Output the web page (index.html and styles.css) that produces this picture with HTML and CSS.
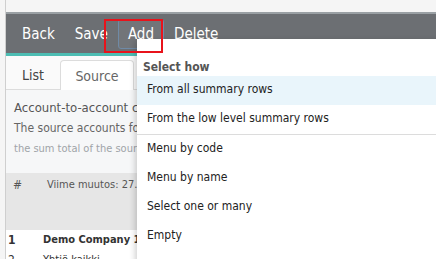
FILE: index.html
```html
<!DOCTYPE html>
<html lang="en">
<head>
    <meta charset="UTF-8">
    <title>Consolidation - Source</title>
    <link rel="stylesheet" href="styles.css">
</head>
<body>
    <div class="page">
        <div class="toolbar">
            <button class="tool-btn">Back</button>
            <button class="tool-btn">Save</button>
            <button class="tool-btn focused">Add</button>
            <button class="tool-btn">Delete</button>
        </div>

        <div class="panel">
            <div class="tabs">
                <div class="tab">List</div>
                <div class="tab active">Source</div>
            </div>

            <div class="content">
                <div class="info">
                    <div class="info-title">Account-to-account consolidation</div>
                    <div class="info-text">The source accounts for the target account are listed below.</div>
                    <div class="info-note">the sum total of the source accounts is moved to the target</div>
                </div>

                <div class="table-head">
                    <span class="col-num">#</span>
                    <span class="col-name">Viime muutos: 27.11.2023</span>
                </div>
                <div class="table-row">
                    <span class="col-num">1</span>
                    <span class="col-name">Demo Company 1</span>
                </div>
                <div class="table-row sub">
                    <span class="col-num">2</span>
                    <span class="col-name">Yhtiö kaikki</span>
                </div>
            </div>
        </div>
    </div>

    <!-- Add dropdown -->
    <div class="dropdown">
        <div class="dropdown-header">Select how</div>
        <div class="dropdown-item hover">From all summary rows</div>
        <div class="dropdown-item">From the low level summary rows</div>
        <div class="dropdown-divider"></div>
        <div class="dropdown-item">Menu by code</div>
        <div class="dropdown-item">Menu by name</div>
        <div class="dropdown-item">Select one or many</div>
        <div class="dropdown-item">Empty</div>
    </div>

    <!-- highlight marker -->
    <div class="marker"></div>
</body>
</html>
```

FILE: styles.css
```css
* {
    box-sizing: border-box;
    font-family: "DejaVu Sans", sans-serif;
    font-stretch: condensed;
}

body {
    margin: 0;
    background: #f5f5f5;
    height: 259px;
    overflow: hidden;
    position: relative;
}

.page {
    margin-left: 5px;
    padding-top: 12px;
    border-left: 1px solid #cfcfcf;
    height: 100%;
}

/* Toolbar */
.toolbar {
    display: flex;
    height: 44px;
    padding: 5px 6px 0;
    background: #6c6f73;
    border-top: 2px solid #9aa0a4;
    border-bottom: 3px solid #4dbdb3;
}

.tool-btn {
    height: 30px;
    padding: 0 9px;
    border: 1px solid transparent;
    border-radius: 3px;
    background: none;
    color: #fff;
    font-size: 15px;
    cursor: pointer;
}

.tool-btn.focused {
    border-color: #6f8aa6;
    background: #727579;
}

/* Left panel, partly under the dropdown */
.panel {
    width: 131px;
    overflow: hidden;
}

/* Tabs */
.tabs {
    display: flex;
    height: 34px;
    padding-top: 4px;
    background: #fafafa;
    border-bottom: 1px solid #dcdcdc;
}

.tab {
    flex: none;
    width: 54px;
    padding-top: 7px;
    text-align: center;
    font-size: 14px;
    color: #444;
}

.tab.active {
    width: 74px;
    margin-bottom: -1px;
    background: #fff;
    border: 1px solid #dcdcdc;
    border-bottom: none;
    border-radius: 4px 4px 0 0;
    color: #666;
}

/* Content */
.content {
    background: #f6f7f8;
    height: 200px;
}

.info {
    padding: 10px 8px 0;
    height: 83px;
}

.info-title {
    font-size: 13px;
    color: #555;
    white-space: nowrap;
}

.info-text {
    margin-top: 6px;
    font-size: 12px;
    color: #666;
    white-space: nowrap;
}

.info-note {
    margin-top: 7px;
    font-size: 11px;
    color: #a0a4a8;
    white-space: nowrap;
}

.table-head {
    display: flex;
    height: 57px;
    padding-top: 5px;
    background: #e6e6e6;
    font-size: 11px;
    color: #555;
}

.table-row {
    display: flex;
    height: 20px;
    padding-top: 3px;
    background: #fff;
    font-size: 11px;
    font-weight: bold;
    color: #333;
}

.table-row.sub {
    font-weight: normal;
}

.col-num {
    flex: none;
    width: 37px;
    padding-left: 2px;
    font-size: 12px;
}

.table-head .col-num {
    width: 41px;
    padding-left: 7px;
}

.col-name {
    white-space: nowrap;
}

/* Dropdown */
.dropdown {
    position: absolute;
    top: 39px;
    left: 137px;
    width: 320px;
    height: 240px;
    background: #fff;
    box-shadow: -2px 2px 6px rgba(0, 0, 0, 0.18);
}

.dropdown-header {
    height: 37px;
    padding: 21px 0 0 6px;
    font-size: 12px;
    font-weight: bold;
    color: #555;
}

.dropdown-item {
    height: 29px;
    padding: 6px 0 0 10px;
    font-size: 12px;
    color: #222;
}

.dropdown-item.hover {
    background: #e9f5fb;
}

.dropdown-divider {
    height: 1px;
    background: #dcdcdc;
}

.marker {
    position: absolute;
    top: 19px;
    left: 104px;
    width: 59px;
    height: 34px;
    border: 2px solid #e8131b;
}
```
